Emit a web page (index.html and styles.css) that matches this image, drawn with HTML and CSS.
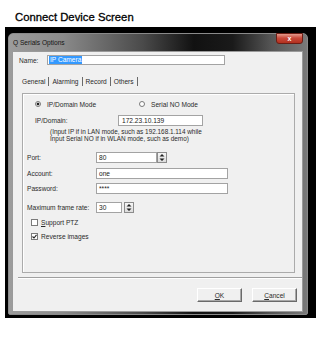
FILE: index.html
```html
<!DOCTYPE html>
<html lang="en">
<head>
    <title>Connect Device Screen</title>
    <meta name="viewport" content="width=device-width, initial-scale=1.0">
    <link rel="stylesheet" href="styles.css">
</head>
<body>
    <h1 class="caption">Connect Device Screen</h1>
    <div class="screen">
        <div class="window">
            <div class="titlebar">
                <span class="title">Q Serials Options</span>
                <span class="close">x</span>
            </div>
            <div class="client">
                <div class="row name_row">
                    <span class="lbl name_lbl">Name:</span>
                    <div class="field name_field"><span class="sel">IP Camera</span></div>
                </div>
                <div class="tabs">
                    <span class="tab active">General</span>
                    <span class="tab">Alarming</span>
                    <span class="tab">Record</span>
                    <span class="tab">Others</span>
                </div>
                <div class="panel">
                    <div class="modes">
                        <span class="opt first"><span class="radio on"></span>IP/Domain Mode</span>
                        <span class="opt"><span class="radio"></span>Serial NO Mode</span>
                    </div>
                    <div class="row ip_row">
                        <span class="lbl ip_lbl">IP/Domain:</span>
                        <div class="field ip_field">172.23.10.139</div>
                    </div>
                    <p class="note">(Input IP if in LAN mode, such as 192.168.1.114 while<br>Input Serial NO if in WLAN mode, such as demo)</p>
                    <div class="row form_row port_row">
                        <span class="lbl">Port:</span>
                        <div class="field port_field">80</div>
                        <div class="spin">
                            <svg width="8" height="9" viewBox="0 0 8 9"><path d="M4 1 L6.5 3.5 L1.5 3.5 Z M4 8 L6.5 5.5 L1.5 5.5 Z" fill="#222"/></svg>
                        </div>
                    </div>
                    <div class="row form_row account_row">
                        <span class="lbl">Account:</span>
                        <div class="field long_field">one</div>
                    </div>
                    <div class="row form_row pwd_row">
                        <span class="lbl">Password:</span>
                        <div class="field long_field">****</div>
                    </div>
                    <div class="row form_row rate_row">
                        <span class="lbl">Maximum frame rate:</span>
                        <div class="field rate_field">30</div>
                        <div class="spin rate_spin">
                            <svg width="8" height="9" viewBox="0 0 8 9"><path d="M4 1 L6.5 3.5 L1.5 3.5 Z M4 8 L6.5 5.5 L1.5 5.5 Z" fill="#222"/></svg>
                        </div>
                    </div>
                    <div class="check_row ptz_row">
                        <span class="box"></span><span><u>S</u>upport PTZ</span>
                    </div>
                    <div class="check_row reverse_row">
                        <span class="box"><svg width="5" height="5" viewBox="0 0 5 5"><path d="M0.5 2.5 L2 4 L4.5 0.8" fill="none" stroke="#222" stroke-width="1.1"/></svg></span><span>Reverse images</span>
                    </div>
                </div>
                <div class="separator"></div>
                <div class="buttons">
                    <button class="btn"><u>O</u>K</button>
                    <button class="btn"><u>C</u>ancel</button>
                </div>
            </div>
        </div>
    </div>
</body>
</html>
```

FILE: styles.css
```css
body {
    margin: 0;
    background-color: white;
    font-family: "Liberation Sans", Arial, sans-serif;
}
.caption {
    margin: 0;
    padding: 11px 0 0 15px;
    height: 16px;
    font-size: 11.3px;
    line-height: 13px;
    font-weight: normal;
    -webkit-text-stroke: 0.3px #000;
    color: #000;
}
.screen {
    box-sizing: border-box;
    width: 311px;
    height: 291px;
    margin-left: 5px;
    padding: 6px 8px 3px 3px;
    background-color: #000;
}
.window {
    box-sizing: border-box;
    width: 300px;
    height: 282px;
    display: flex;
    flex-direction: column;
    padding: 0 4px 2px 3px;
    border: 1px solid #8a8a8a;
    border-radius: 5px 5px 2px 2px;
    background: linear-gradient(90deg, #9c9c9c 0%, #8a8a8a 18%, #4a4a4a 45%, #111 62%, #1a1a1a 75%, #555 88%, #7a7a7a 100%);
}
.titlebar {
    height: 17px;
    display: flex;
    justify-content: space-between;
    align-items: flex-start;
}
.title {
    padding: 5px 0 0 1px;
    font-size: 6.6px;
    line-height: 8px;
    color: #151515;
}
.close {
    width: 27px;
    height: 11px;
    margin-top: -1px;
    box-sizing: border-box;
    border: 1px solid #6b1d14;
    border-radius: 0 0 3px 3px;
    background: linear-gradient(180deg, #e39a8c 0%, #c9493a 45%, #b2301f 100%);
    color: white;
    font-size: 7px;
    font-weight: bold;
    line-height: 9px;
    text-align: center;
}
.client {
    flex: 1;
    box-sizing: border-box;
    border: 1px solid #9a9a9a;
    background-color: #f0f0f0;
    font-size: 6.6px;
    color: #2a2a2a;
}
.row {
    display: flex;
    align-items: center;
}
.name_row {
    padding: 3px 0 0 6px;
}
.lbl {
    flex-shrink: 0;
}
.name_lbl {
    width: 28px;
}
.field {
    box-sizing: border-box;
    height: 11px;
    padding-left: 2px;
    border: 1px solid #a3a3a3;
    background-color: white;
    line-height: 9px;
    color: #222;
}
.name_field {
    width: 178px;
    height: 10px;
    padding-left: 1px;
    line-height: 8px;
}
.sel {
    display: inline-block;
    padding: 0 1px;
    background-color: #3399ff;
    color: white;
}
.tabs {
    display: flex;
    margin: 12px 0 0 6px;
    height: 9px;
}
.tab {
    padding: 0 3px;
    border-right: 1px solid #6a6a6a;
    line-height: 9px;
}
.panel {
    box-sizing: border-box;
    width: 273px;
    height: 180px;
    margin: 7px 0 0 9px;
    border: 1px solid #ababab;
    box-shadow: inset 1px 1px 0 #fff;
}
.modes {
    display: flex;
    align-items: center;
    height: 8px;
    margin-top: 6px;
    padding-left: 12px;
}
.opt {
    display: flex;
    align-items: center;
}
.opt.first {
    width: 104px;
}
.radio {
    box-sizing: border-box;
    width: 6px;
    height: 6px;
    margin-right: 6px;
    border: 1px solid #7a7a7a;
    border-radius: 50%;
    background-color: white;
}
.radio.on {
    background: radial-gradient(circle, #222 0, #222 1.2px, #fff 1.7px);
}
.ip_row {
    margin-top: 7px;
    padding-left: 12px;
}
.ip_lbl {
    width: 83px;
}
.ip_field {
    width: 85px;
    padding-left: 3px;
}
.note {
    margin: 2px 0 0 27px;
    font-size: 6.4px;
    line-height: 7px;
}
.form_row {
    padding-left: 4px;
}
.form_row .lbl {
    width: 69px;
}
.port_row {
    margin-top: 10px;
}
.port_field {
    width: 61px;
}
.spin {
    box-sizing: border-box;
    width: 10px;
    height: 11px;
    display: flex;
    align-items: center;
    justify-content: center;
    border: 1px solid #8c8c8c;
    background: linear-gradient(180deg, #f6f6f6, #dcdcdc);
}
.account_row {
    margin-top: 5px;
}
.pwd_row {
    margin-top: 4px;
}
.long_field {
    width: 132px;
}
.rate_row {
    margin-top: 8px;
}
.rate_field {
    width: 26px;
}
.rate_spin {
    margin-left: 2px;
}
.check_row {
    display: flex;
    align-items: center;
    height: 7px;
    padding-left: 8px;
}
.ptz_row {
    margin-top: 6px;
}
.reverse_row {
    margin-top: 7px;
}
.box {
    box-sizing: border-box;
    width: 7px;
    height: 7px;
    margin-right: 3px;
    display: flex;
    align-items: center;
    justify-content: center;
    border: 1px solid #7a7a7a;
    background-color: white;
}
.separator {
    margin: 4px 0 0 5px;
    border-top: 1px solid #a0a0a0;
    border-bottom: 1px solid #fff;
}
.buttons {
    display: flex;
    justify-content: flex-end;
    gap: 10px;
    margin-top: 9px;
    padding-right: 5px;
}
.btn {
    box-sizing: border-box;
    width: 45px;
    height: 14px;
    padding: 0;
    border: 1px solid;
    border-color: #fff #6a6a6a #6a6a6a #fff;
    box-shadow: inset -1px -1px 0 #a8a8a8;
    background-color: #f0f0f0;
    font-family: "Liberation Sans", Arial, sans-serif;
    font-size: 6.6px;
    color: #2a2a2a;
}
```
